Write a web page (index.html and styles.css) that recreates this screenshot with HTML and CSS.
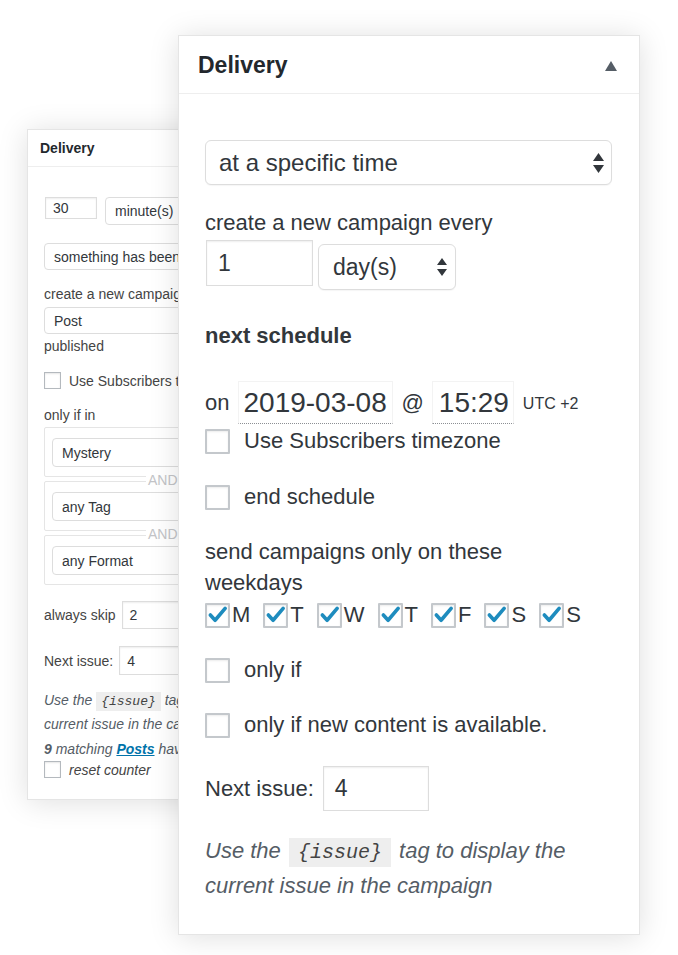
FILE: index.html
```html
<!DOCTYPE html>
<html lang="en">
<head>
<meta charset="utf-8">
<title>Delivery</title>
<link rel="stylesheet" href="styles.css">
</head>
<body>
<div class="stage">

  <section class="panel panel-back">
    <div class="b-head"><span class="b-title">Delivery</span></div>
    <div class="b-body">
      <div class="b-row1">
        <div class="b-input b-input-30">30</div>
        <div class="b-sel b-sel-unit">minute(s)</div>
      </div>
      <div class="b-sel b-sel-wide b-mt18">something has been</div>
      <div class="b-line b-mt14">create a new campaign</div>
      <div class="b-sel b-sel-wide b-mt3">Post</div>
      <div class="b-line b-mt2">published</div>
      <label class="b-check b-mt16"><span class="cb-sm"></span><span>Use Subscribers timezone</span></label>
      <div class="b-line b-mt16">only if in</div>
      <div class="b-group b-mt2">
        <div class="b-sel b-sel-inner">Mystery</div>
      </div>
      <div class="b-group b-mt4">
        <span class="b-and">AND</span>
        <div class="b-sel b-sel-inner">any Tag</div>
      </div>
      <div class="b-group b-mt4">
        <span class="b-and">AND</span>
        <div class="b-sel b-sel-inner">any Format</div>
      </div>
      <div class="b-inline b-mt16">
        <span>always skip</span>
        <div class="b-input b-input-num">2</div>
      </div>
      <div class="b-inline b-mt17">
        <span>Next issue:</span>
        <div class="b-input b-input-num b-input-tall">4</div>
      </div>
      <p class="b-note b-mt14">Use the <code class="b-code">{issue}</code> tag to display the<br>current issue in the campaign</p>
      <p class="b-note b-mt3"><strong>9</strong> matching <a class="b-link" href="#">Posts</a> have been published</p>
      <label class="b-check b-check-italic b-mt1"><span class="cb-sm"></span><span>reset counter</span></label>
    </div>
  </section>

  <section class="panel panel-front">
    <div class="f-head">
      <span class="f-title">Delivery</span>
      <span class="f-toggle"></span>
    </div>
    <div class="f-body">
      <div class="f-select">
        <span>at a specific time</span>
        <svg class="f-arrows" width="11" height="20" viewBox="0 0 11 20"><path d="M0 8 L5.5 0 L11 8 Z M0 12 L5.5 20 L11 12 Z" fill="#32373c"/></svg>
      </div>

      <div class="f-label">create a new campaign every</div>
      <div class="f-every">
        <div class="f-input f-input-every">1</div>
        <div class="f-select f-select-sm">
          <span>day(s)</span>
          <svg class="f-arrows" width="10" height="18" viewBox="0 0 10 18"><path d="M0 7 L5 0 L10 7 Z M0 11 L5 18 L10 11 Z" fill="#32373c"/></svg>
        </div>
      </div>

      <div class="f-strong">next schedule</div>

      <div class="f-date">
        <span>on</span>
        <span class="f-dt f-dt-date">2019-03-08</span>
        <span class="f-at">@</span>
        <span class="f-dt f-dt-time">15:29</span>
        <span class="f-utc">UTC +2</span>
      </div>

      <label class="f-check f-mt4"><span class="cb"></span><span>Use Subscribers timezone</span></label>
      <label class="f-check f-mt30"><span class="cb"></span><span>end schedule</span></label>

      <div class="f-para">send campaigns only on these<br>weekdays</div>
      <div class="f-days">
        <label class="day"><span class="cb"><svg width="22" height="22" viewBox="0 0 22 22"><path d="M3.5 11 L8.5 16.5 L19 4" fill="none" stroke="#1e8cbe" stroke-width="3.8" stroke-linecap="round" stroke-linejoin="round"/></svg></span><span>M</span></label>
        <label class="day"><span class="cb"><svg width="22" height="22" viewBox="0 0 22 22"><path d="M3.5 11 L8.5 16.5 L19 4" fill="none" stroke="#1e8cbe" stroke-width="3.8" stroke-linecap="round" stroke-linejoin="round"/></svg></span><span>T</span></label>
        <label class="day"><span class="cb"><svg width="22" height="22" viewBox="0 0 22 22"><path d="M3.5 11 L8.5 16.5 L19 4" fill="none" stroke="#1e8cbe" stroke-width="3.8" stroke-linecap="round" stroke-linejoin="round"/></svg></span><span>W</span></label>
        <label class="day"><span class="cb"><svg width="22" height="22" viewBox="0 0 22 22"><path d="M3.5 11 L8.5 16.5 L19 4" fill="none" stroke="#1e8cbe" stroke-width="3.8" stroke-linecap="round" stroke-linejoin="round"/></svg></span><span>T</span></label>
        <label class="day"><span class="cb"><svg width="22" height="22" viewBox="0 0 22 22"><path d="M3.5 11 L8.5 16.5 L19 4" fill="none" stroke="#1e8cbe" stroke-width="3.8" stroke-linecap="round" stroke-linejoin="round"/></svg></span><span>F</span></label>
        <label class="day"><span class="cb"><svg width="22" height="22" viewBox="0 0 22 22"><path d="M3.5 11 L8.5 16.5 L19 4" fill="none" stroke="#1e8cbe" stroke-width="3.8" stroke-linecap="round" stroke-linejoin="round"/></svg></span><span>S</span></label>
        <label class="day"><span class="cb"><svg width="22" height="22" viewBox="0 0 22 22"><path d="M3.5 11 L8.5 16.5 L19 4" fill="none" stroke="#1e8cbe" stroke-width="3.8" stroke-linecap="round" stroke-linejoin="round"/></svg></span><span>S</span></label>
      </div>

      <label class="f-check f-mt29"><span class="cb"></span><span>only if</span></label>
      <label class="f-check f-mt29"><span class="cb"></span><span>only if new content is available.</span></label>

      <div class="f-issue">
        <span>Next issue:</span>
        <div class="f-input f-input-issue">4</div>
      </div>

      <p class="f-note">Use the <code class="f-code">{issue}</code> tag to display the<br>current issue in the campaign</p>
    </div>
  </section>

</div>
</body>
</html>
```

FILE: styles.css
```css
* {
  box-sizing: border-box;
}

body {
  margin: 0;
  background: #ffffff;
  font-family: "Liberation Sans", Arial, sans-serif;
  color: #32373c;
}

.stage {
  position: relative;
  width: 678px;
  height: 955px;
  overflow: hidden;
  background: #ffffff;
}

.panel {
  position: absolute;
  background: #ffffff;
  border: 1px solid #e5e5e5;
  box-shadow: 0 2px 28px rgba(0, 0, 0, 0.13);
}

/* ---------- back panel ---------- */

.panel-back {
  left: 27px;
  top: 129px;
  width: 260px;
  height: 671px;
  font-size: 14px;
  color: #444;
}

.b-head {
  height: 37px;
  border-bottom: 1px solid #eeeeee;
  display: flex;
  align-items: center;
  padding-left: 12px;
}

.b-title {
  font-weight: bold;
  font-size: 14px;
  color: #23282d;
}

.b-body {
  padding-left: 16px;
  display: flex;
  flex-direction: column;
  align-items: flex-start;
}

.b-row1 {
  margin-top: 30px;
  display: flex;
  align-items: flex-start;
  gap: 8px;
}

.b-input {
  border: 1px solid #dddddd;
  box-shadow: inset 0 1px 2px rgba(0, 0, 0, 0.07);
  display: flex;
  align-items: center;
  padding-left: 7px;
  color: #32373c;
  background: #fff;
}

.b-input-30 {
  width: 52px;
  height: 22px;
  margin-left: 1px;
}

.b-input-num {
  width: 80px;
  height: 28px;
}

.b-input-tall {
  height: 29px;
}

.b-sel {
  border: 1px solid #dddddd;
  border-radius: 4px;
  display: flex;
  align-items: center;
  padding-left: 9px;
  color: #32373c;
  background: #fff;
  white-space: nowrap;
}

.b-sel-unit {
  width: 120px;
  height: 28px;
}

.b-sel-wide {
  width: 220px;
  height: 27px;
}

.b-group {
  position: relative;
  width: 230px;
  height: 50px;
  border: 1px solid #e5e5e5;
  border-radius: 2px;
  padding: 10px 0 0 7px;
}

.b-sel-inner {
  width: 215px;
  height: 29px;
}

.b-and {
  position: absolute;
  left: 101px;
  top: -10px;
  line-height: 16px;
  padding: 0 2px;
  background: #fff;
  color: #c3c4c7;
  font-size: 14px;
}

.b-line {
  line-height: 20px;
  white-space: nowrap;
}

.b-check {
  display: flex;
  align-items: center;
  gap: 8px;
  white-space: nowrap;
}

.b-check-italic {
  font-style: italic;
}

.cb-sm {
  width: 17px;
  height: 17px;
  border: 1px solid #b4b9be;
  box-shadow: inset 0 1px 2px rgba(0, 0, 0, 0.1);
  background: #fff;
  flex: none;
}

.b-inline {
  display: flex;
  align-items: center;
  gap: 6px;
  white-space: nowrap;
}

.b-note {
  margin-bottom: 0;
  font-style: italic;
  line-height: 22px;
  color: #555d66;
  white-space: nowrap;
}

.b-note strong {
  font-weight: bold;
}

.b-code {
  font-family: "Liberation Mono", "Courier New", monospace;
  font-size: 13px;
  background: #eeeeee;
  padding: 2px 5px;
  color: #444;
}

.b-link {
  color: #0073aa;
  font-weight: bold;
  text-decoration: underline;
}

.b-mt1 { margin-top: 1px; }
.b-mt2 { margin-top: 2px; }
.b-mt3 { margin-top: 3px; }
.b-mt4 { margin-top: 4px; }
.b-mt14 { margin-top: 14px; }
.b-mt16 { margin-top: 16px; }
.b-mt17 { margin-top: 17px; }
.b-mt18 { margin-top: 18px; }

/* ---------- front panel ---------- */

.panel-front {
  left: 178px;
  top: 35px;
  width: 462px;
  height: 900px;
}

.f-head {
  height: 58px;
  border-bottom: 1px solid #eeeeee;
  display: flex;
  align-items: center;
  justify-content: space-between;
  padding: 0 22px 0 19px;
}

.f-title {
  font-size: 23px;
  font-weight: bold;
  color: #23282d;
  margin-top: 1px;
}

.f-toggle {
  width: 0;
  height: 0;
  border-left: 6.5px solid transparent;
  border-right: 6.5px solid transparent;
  border-bottom: 10px solid #555d66;
  margin-top: 2px;
}

.f-body {
  padding: 0 27px 0 26px;
  display: flex;
  flex-direction: column;
  align-items: stretch;
  font-size: 22px;
}

.f-select {
  margin-top: 46px;
  height: 45px;
  border: 1px solid #dddddd;
  border-radius: 6px;
  padding: 0 7px 0 13px;
  display: flex;
  align-items: center;
  justify-content: space-between;
  font-size: 24px;
  color: #32373c;
  box-shadow: 0 1px 1px rgba(0, 0, 0, 0.04);
  background: #fff;
}

.f-arrows {
  flex: none;
}

.f-label {
  margin-top: 23px;
  line-height: 30px;
}

.f-every {
  margin-top: 2px;
  display: flex;
  align-items: flex-start;
  gap: 5px;
}

.f-input {
  border: 1px solid #dddddd;
  box-shadow: inset 0 1px 2px rgba(0, 0, 0, 0.07);
  display: flex;
  align-items: center;
  font-size: 23px;
  color: #32373c;
  background: #fff;
}

.f-input-every {
  width: 107px;
  height: 46px;
  padding-left: 11px;
  margin-left: 1px;
}

.f-select-sm {
  margin-top: 4px;
  width: 138px;
  height: 46px;
  font-size: 23px;
  padding: 0 8px 0 14px;
}

.f-strong {
  margin-top: 31px;
  line-height: 30px;
  font-weight: bold;
  color: #32373c;
}

.f-date {
  margin-top: 30px;
  height: 43px;
  display: flex;
  align-items: center;
}

.f-dt {
  height: 43px;
  display: flex;
  align-items: center;
  border: 1px solid #f3f3f3;
  border-bottom: 1px dotted #8c8f94;
  font-size: 28px;
  color: #32373c;
}

.f-dt-date {
  width: 155px;
  padding-left: 4px;
  margin-left: 9px;
}

.f-at {
  margin: 0 8px;
}

.f-dt-time {
  width: 82px;
  padding-left: 6px;
}

.f-utc {
  font-size: 16px;
  margin-left: 9px;
  margin-top: 3px;
}

.f-check {
  display: flex;
  align-items: center;
  gap: 14px;
  height: 26px;
}

.cb {
  position: relative;
  width: 25px;
  height: 25px;
  border: 2px solid #c4c8cc;
  border-radius: 1px;
  box-shadow: inset 0 1px 2px rgba(0, 0, 0, 0.08);
  background: #fff;
  flex: none;
  display: flex;
  align-items: center;
  justify-content: center;
}

.f-mt4 { margin-top: 4px; }
.f-mt29 { margin-top: 29px; }
.f-mt30 { margin-top: 30px; }

.f-para {
  margin-top: 26px;
  line-height: 31px;
}

.f-days {
  margin-top: 4px;
  display: flex;
  gap: 13px;
  height: 26px;
}

.day {
  display: flex;
  align-items: center;
  gap: 2px;
}

.f-issue {
  margin-top: 28px;
  display: flex;
  align-items: center;
  gap: 9px;
}

.f-input-issue {
  width: 106px;
  height: 45px;
  padding-left: 11px;
}

.f-note {
  margin: 23px 0 0;
  font-style: italic;
  line-height: 33px;
  color: #555d66;
}

.f-code {
  font-family: "Liberation Mono", "Courier New", monospace;
  font-size: 20px;
  background: #eeeeee;
  padding: 3px 9px;
  margin: 0 2px;
  color: #444;
}
```
